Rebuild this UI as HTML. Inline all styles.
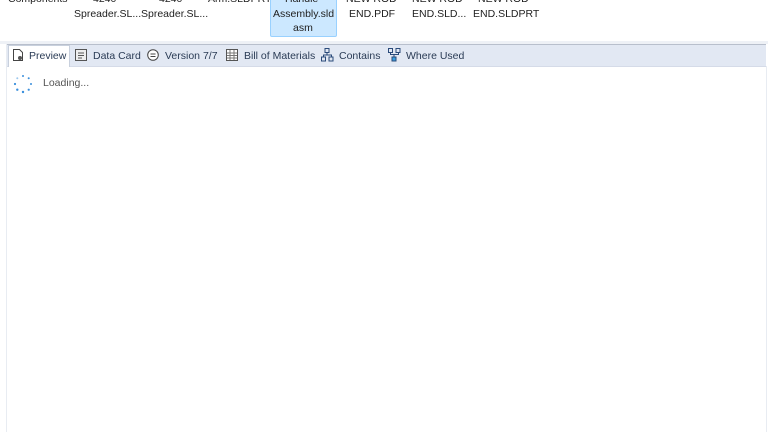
<!DOCTYPE html>
<html><head><style>
body{margin:0;width:768px;height:432px;background:#fff;font-family:"Liberation Sans",sans-serif;font-size:10px;color:#1e1e1e;position:relative;overflow:hidden}
.t{position:absolute;white-space:nowrap;text-align:center;font-size:10.5px}
.tab{position:absolute;top:48px;height:16px;line-height:16px;color:#2a3b55;font-size:10.5px}
</style></head><body>
<div style="position:absolute;left:270px;top:-6px;width:65px;height:41px;background:#cce8ff;border:1px solid #99d1ff;border-radius:2px"></div>
<div class="t" style="left:8px;top:-7px">Components</div>
<div class="t" style="left:93px;top:-7px">4240</div>
<div class="t" style="left:159px;top:-7px">4240</div>
<div class="t" style="left:208px;top:-7px">Arm.SLDPRT</div>
<div class="t" style="left:285px;top:-7px">Handle</div>
<div class="t" style="left:346px;top:-7px">NEW ROD</div>
<div class="t" style="left:412px;top:-7px">NEW ROD</div>
<div class="t" style="left:478px;top:-7px">NEW ROD</div>
<div class="t" style="left:74px;top:8px">Spreader.SL...</div>
<div class="t" style="left:141px;top:8px">Spreader.SL...</div>
<div class="t" style="left:273px;top:8px">Assembly.sld</div>
<div class="t" style="left:349px;top:8px">END.PDF</div>
<div class="t" style="left:412px;top:8px">END.SLD...</div>
<div class="t" style="left:473px;top:8px">END.SLDPRT</div>
<div class="t" style="left:293px;top:22px">asm</div>
<div style="position:absolute;left:0;top:41px;width:768px;height:3px;background:#eef1f6"></div>
<div style="position:absolute;left:6px;top:44px;width:760px;height:21px;background:#e2e8f3;border-top:1px solid #b8bfcc;border-bottom:1px solid #d5dbe8"></div>
<div style="position:absolute;left:6px;top:44px;width:1px;height:388px;background:#e8ecf2"></div>
<div style="position:absolute;left:766px;top:66px;width:1px;height:366px;background:#e8ecf2"></div>
<div style="position:absolute;left:8px;top:45px;width:60px;height:21px;background:#fff;border:1px solid #c8d0dd;border-bottom:none"></div>
<svg style="position:absolute;left:12px;top:48px" width="12" height="14"><path d="M1.5 1.5h6l3 3v8h-9z" fill="#fff" stroke="#444"/><circle cx="8" cy="10" r="2" fill="#555"/></svg>
<div class="tab" style="left:29px">Preview</div>
<svg style="position:absolute;left:75px;top:49px" width="12" height="12"><rect x=".5" y=".5" width="11" height="11" fill="#eee" stroke="#555"/><path d="M3 4h6M3 6.5h6M3 9h4" stroke="#555"/></svg>
<div class="tab" style="left:93px">Data Card</div>
<svg style="position:absolute;left:147px;top:49px" width="12" height="12"><circle cx="6" cy="6" r="5.3" fill="#fff" stroke="#444"/><path d="M3.5 5h5M3.5 7.5h5" stroke="#444"/></svg>
<div class="tab" style="left:165px">Version 7/7</div>
<svg style="position:absolute;left:226px;top:49px" width="12" height="12"><rect x=".5" y=".5" width="11" height="11" fill="#fff" stroke="#555"/><path d="M1 4h10M1 6.5h10M1 9h10M4 1v10M8 1v10" stroke="#777"/></svg>
<div class="tab" style="left:244px">Bill of Materials</div>
<svg style="position:absolute;left:321px;top:48px" width="13" height="14"><rect x="4" y=".5" width="4" height="4" fill="none" stroke="#2a4a7a"/><rect x=".5" y="9" width="4" height="4" fill="none" stroke="#2a4a7a"/><rect x="8" y="9" width="4" height="4" fill="none" stroke="#2a4a7a"/><path d="M6 4.5v2.5M2.5 9V7h8v2" stroke="#2a4a7a" fill="none"/></svg>
<div class="tab" style="left:339px">Contains</div>
<svg style="position:absolute;left:388px;top:48px" width="13" height="14"><rect x=".5" y=".5" width="4" height="4" fill="none" stroke="#2a4a7a"/><rect x="8" y=".5" width="4" height="4" fill="none" stroke="#2a4a7a"/><rect x="4" y="9" width="4" height="4" fill="#3aa0e0" stroke="#2a4a7a"/><path d="M2.5 4.5v2h8v-2M6 6.5V9" stroke="#2a4a7a" fill="none"/></svg>
<div class="tab" style="left:406px">Where Used</div>
<svg style="position:absolute;left:13px;top:74px" width="20" height="20"><g fill="#3a8fdc"><circle cx="10" cy="2" r="1"/><circle cx="15.7" cy="4.3" r="1"/><circle cx="18" cy="10" r="1"/><circle cx="15.7" cy="15.7" r="1.1"/><circle cx="10" cy="18" r="1.2"/><circle cx="4.3" cy="15.7" r="1.2"/><circle cx="2" cy="10" r="1.1"/><circle cx="4.3" cy="4.3" r="1" opacity=".5"/></g></svg>
<div style="position:absolute;left:43px;top:77px;color:#555;font-size:10.5px">Loading...</div>
</body></html>
